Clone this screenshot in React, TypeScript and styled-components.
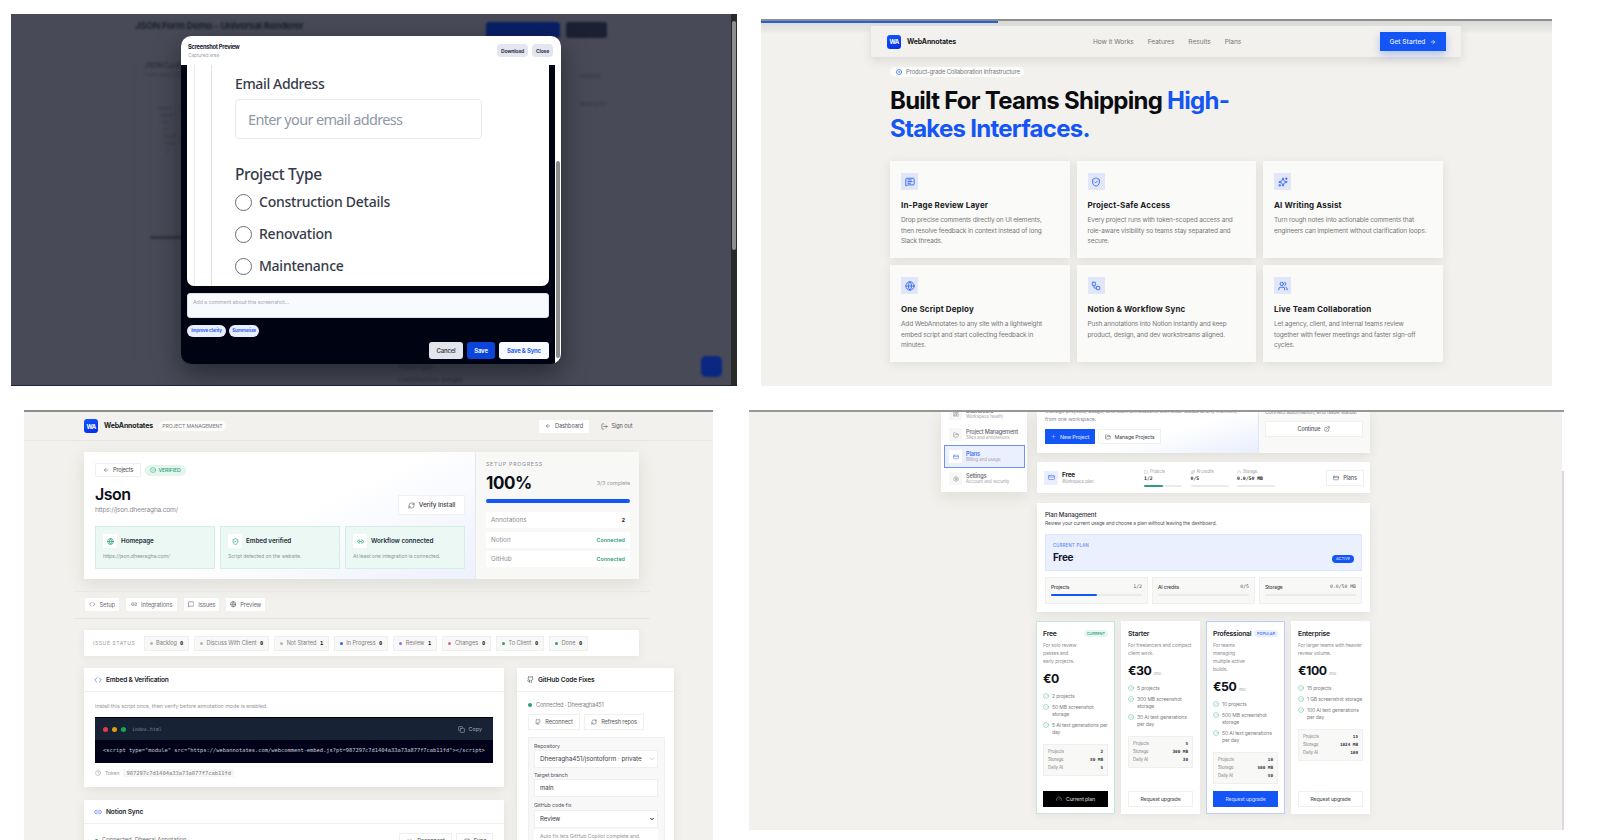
import React from "react";
import styled, { createGlobalStyle, css } from "styled-components";
import {
  ArrowLeft,
  ArrowRight,
  ChevronDown,
  CircleCheck,
  CircleDot,
  Clock,
  Code,
  Copy,
  CreditCard,
  ExternalLink,
  Folder,
  FolderOpen,
  Gauge,
  Github,
  Globe,
  LayoutDashboard,
  Link2,
  LogOut,
  MessageSquare,
  MessageSquareText,
  Plus,
  RefreshCw,
  Settings,
  ShieldCheck,
  Sparkles,
  Users,
  Workflow,
} from "lucide-react";

const BLUE = "#1455f5";
const GREEN = "#2f9e7c";

const GlobalStyle = createGlobalStyle`
  * { box-sizing: border-box; }
  body {
    margin: 0;
    background: #fff;
    font-family: Inter, "Liberation Sans", sans-serif;
  }
  svg { flex: none; display: block; }
`;

interface TextProps {
  $size?: number;
  $weight?: number;
  $color?: string;
  $spacing?: number;
  $line?: number;
  $mono?: boolean;
}

const Text = styled.span<TextProps>`
  display: block;
  flex: none;
  white-space: pre;
  font-size: ${(p) => p.$size ?? 5.6}px;
  font-weight: ${(p) => p.$weight ?? 400};
  color: ${(p) => p.$color ?? "#77787b"};
  letter-spacing: ${(p) => p.$spacing ?? -0.2}px;
  line-height: ${(p) => p.$line ?? 8}px;
  ${(p) => p.$mono && css`font-family: "DejaVu Sans Mono", monospace;`}
`;

/* ---------- page ---------- */

const Page = styled.main`
  display: flex;
  width: 1600px;
  height: 840px;
  overflow: hidden;
`;

const LeftColumn = styled.div`
  width: 749px;
  flex: none;
`;

const RightColumn = styled.div`
  width: 851px;
  flex: none;
`;

/* ---------- screenshot preview ---------- */

const PreviewShot = styled.section`
  position: relative;
  display: flex;
  justify-content: space-between;
  width: 726px;
  height: 372px;
  margin: 14px 0 0 11px;
  background: #484b57;
  border-bottom: 1px solid #1c2438;
  overflow: hidden;
`;

const DimmedPage = styled.div`
  width: 596px;
  padding: 8px 0 0 124px;
  filter: blur(1px);
`;

const DimmedHeader = styled.div`
  display: flex;
  align-items: flex-start;
`;

const DimmedButton = styled.div<{ $color: string; $width: number; $left: number }>`
  width: ${(p) => p.$width}px;
  height: 16px;
  margin-left: ${(p) => p.$left}px;
  border-radius: 3px;
  background: ${(p) => p.$color};
`;

const DimmedBody = styled.div`
  display: flex;
  justify-content: space-between;
  margin: 20px 0 0 0;
  padding-left: 8px;
  height: 303px;
  border-left: 1px solid #454853;
`;

const DimmedColumn = styled.div<{ $top: number }>`
  padding-top: ${(p) => p.$top}px;
`;

const DimmedCode = styled.div`
  margin: 24px 0 0 12px;
`;

const DimmedRule = styled.div`
  width: 40px;
  height: 3px;
  margin: 82px 0 0 6px;
  background: #30333e;
`;

const DimmedFooter = styled.div`
  padding-left: 264px;
`;

const ChatBubble = styled.div`
  position: absolute;
  right: 15px;
  bottom: 8px;
  width: 21px;
  height: 21px;
  border-radius: 5px;
  background: #0a2882;
  filter: blur(1px);
`;

const PageScrollbar = styled.div`
  width: 6px;
  padding: 7px 1px 0;
  background: #292929;
`;

const PageThumb = styled.div`
  height: 229px;
  border-radius: 2px;
  background: #8f8f8f;
`;

const Modal = styled.div`
  position: absolute;
  left: 170px;
  top: 22px;
  width: 380px;
  height: 328px;
  border-radius: 10px;
  overflow: hidden;
  background: #000412;
`;

const ModalShadow = styled.div`
  position: absolute;
  left: 170px;
  top: 22px;
  width: 380px;
  height: 328px;
  border-radius: 10px;
  box-shadow: 0 10px 26px rgba(15, 15, 25, 0.55);
`;

const ModalHeader = styled.header`
  display: flex;
  align-items: center;
  height: 29px;
  padding: 0 8px 0 7px;
  background: #fff;
`;

const ModalTitle = styled.div`
  flex: 1;
`;

const SmallButton = styled.div<{ $width: number }>`
  display: flex;
  align-items: center;
  justify-content: center;
  width: ${(p) => p.$width}px;
  height: 13px;
  margin-left: 4px;
  border-radius: 4px;
  background: #e4e6ef;
`;

const ModalBody = styled.div`
  display: flex;
  justify-content: space-between;
  height: 299px;
  padding-left: 6px;
`;

const ModalContent = styled.div`
  width: 362px;
`;

const Capture = styled.div`
  display: flex;
  height: 221px;
  padding-left: 7px;
  border-radius: 0 0 7px 7px;
  background: #fff;
`;

const CaptureGutter = styled.div`
  width: 18px;
  border-left: 1px solid #e8eaf2;
  border-right: 1px solid #dfe1e6;
`;

const CaptureForm = styled.div`
  padding: 9px 0 0 23px;
  font-family: "Noto Sans", sans-serif;
`;

const EmailField = styled.div`
  display: flex;
  align-items: center;
  width: 247px;
  height: 40px;
  margin: 6px 0 26px;
  padding-left: 12px;
  border: 1px solid #e9ebf4;
  border-radius: 4px;
`;

const Radio = styled.div`
  display: flex;
  align-items: center;
  gap: 7px;
  height: 32px;
  &::before {
    content: "";
    box-sizing: border-box;
    width: 17px;
    height: 17px;
    border: 1.6px solid #6d6f77;
    border-radius: 50%;
  }
`;

const RadioList = styled.div`
  margin-top: 3px;
`;

const CommentBox = styled.div`
  height: 25px;
  margin-top: 7px;
  padding: 4px 5px;
  border-radius: 3px;
  background: #f9fafd;
  border: 1px solid #dcdfe6;
`;

const PillRow = styled.div`
  display: flex;
  gap: 3px;
  margin-top: 7px;
`;

const ActionPill = styled.div<{ $width: number }>`
  display: flex;
  align-items: center;
  justify-content: center;
  width: ${(p) => p.$width}px;
  height: 12px;
  border-radius: 6px;
  background: #e9eefc;
`;

const ModalFooter = styled.div`
  display: flex;
  justify-content: flex-end;
  gap: 4px;
  margin-top: 5px;
`;

const ModalButton = styled.div<{ $bg: string; $width: number }>`
  display: flex;
  align-items: center;
  justify-content: center;
  width: ${(p) => p.$width}px;
  height: 17px;
  border-radius: 3px;
  background: ${(p) => p.$bg};
`;

const ModalScrollbar = styled.div`
  width: 6px;
  padding: 96px 0 0 1px;
  background: #fff;
`;

const ModalThumb = styled.div`
  width: 4px;
  height: 197px;
  border-radius: 2px;
  background: #8d8d8d;
`;

const codeLines = ["\"fields\": {", "  \"name\":", "    \"id\"", "      \"a\"", "      \"type\"", "      \"label\"", "        {}"];

const PreviewPanel: React.FC = () => (
  <PreviewShot>
    <DimmedPage>
      <DimmedHeader>
        <Text $size={9.5} $weight={700} $color="#1b1e2c" $spacing={-0.3}>
          JSON Form Demo - Universal Renderer
        </Text>
        <DimmedButton $color="#091f66" $width={74} $left={182} />
        <DimmedButton $color="#1b2133" $width={41} $left={6} />
      </DimmedHeader>
      <DimmedBody>
        <DimmedColumn $top={4}>
          <Text $size={7} $weight={700} $color="#30333e">JSON Configuration</Text>
          <Text $size={5.5} $line={11} $color="#3a3d48">Paste your JSON config</Text>
          <DimmedCode>
            {codeLines.map((line) => (
              <Text key={line} $size={5} $line={7} $color="#383b46">{line}</Text>
            ))}
          </DimmedCode>
          <DimmedRule />
        </DimmedColumn>
        <DimmedColumn $top={4}>
          <Text $size={5.5} $line={28} $color="#343742">required</Text>
          <Text $size={5.5} $line={28} $color="#343742">description</Text>
        </DimmedColumn>
      </DimmedBody>
      <DimmedFooter>
        <Text $size={6} $line={12} $color="#282b36">Project Type</Text>
        <Text $size={6.5} $line={14} $spacing={0.1} $color="#282b36">Construction Details</Text>
      </DimmedFooter>
    </DimmedPage>
    <PageScrollbar>
      <PageThumb />
    </PageScrollbar>
    <ChatBubble />
    <ModalShadow />
    <Modal>
      <ModalHeader>
        <ModalTitle>
          <Text $size={5.8} $weight={700} $color="#1d2230" $line={9} $spacing={-0.28}>Screenshot Preview</Text>
          <Text $size={5} $color="#a3a7b3">Captured area</Text>
        </ModalTitle>
        <SmallButton $width={31}>
          <Text $size={5} $weight={700} $color="#343a4c">Download</Text>
        </SmallButton>
        <SmallButton $width={21}>
          <Text $size={5} $weight={700} $color="#343a4c">Close</Text>
        </SmallButton>
      </ModalHeader>
      <ModalBody>
        <ModalContent>
          <Capture>
            <CaptureGutter />
            <CaptureForm>
              <Text $size={14} $weight={500} $color="#363b49" $line={19} $spacing={-0.36}>Email Address</Text>
              <EmailField>
                <Text $size={14.5} $color="#9097a6" $line={20} $spacing={-0.65}>Enter your email address</Text>
              </EmailField>
              <Text $size={15.5} $weight={500} $color="#363b49" $line={18} $spacing={-0.35}>Project Type</Text>
              <RadioList>
                {["Construction Details", "Renovation", "Maintenance"].map((label) => (
                  <Radio key={label}>
                    <Text $size={14} $weight={500} $color="#363b49" $line={20} $spacing={-0.25}>{label}</Text>
                  </Radio>
                ))}
              </RadioList>
            </CaptureForm>
          </Capture>
          <CommentBox>
            <Text $size={5.3} $color="#a6abb6" $spacing={-0.1}>Add a comment about this screenshot...</Text>
          </CommentBox>
          <PillRow>
            <ActionPill $width={39}>
              <Text $size={4.6} $weight={700} $color="#3566f0">Improve clarity</Text>
            </ActionPill>
            <ActionPill $width={30}>
              <Text $size={4.6} $weight={700} $color="#3566f0">Summarize</Text>
            </ActionPill>
          </PillRow>
          <ModalFooter>
            <ModalButton $bg="#e2e5ec" $width={34}>
              <Text $size={6} $weight={600} $color="#3c4252">Cancel</Text>
            </ModalButton>
            <ModalButton $bg="#0c45da" $width={28}>
              <Text $size={6} $weight={700} $color="#e8eeff">Save</Text>
            </ModalButton>
            <ModalButton $bg="#f8faff" $width={50}>
              <Text $size={6} $weight={700} $color="#2c5ff0">Save &amp; Sync</Text>
            </ModalButton>
          </ModalFooter>
        </ModalContent>
        <ModalScrollbar>
          <ModalThumb />
        </ModalScrollbar>
      </ModalBody>
    </Modal>
  </PreviewShot>
);

/* ---------- shared brand ---------- */

const BrandRow = styled.div`
  display: flex;
  align-items: center;
  gap: 6px;
`;

const LogoTile = styled.div`
  display: flex;
  align-items: center;
  justify-content: center;
  width: 14px;
  height: 14px;
  border-radius: 3px;
  background: linear-gradient(160deg, #0f57ff, #0a2be0);
  color: #fff;
  font-size: 6px;
  font-weight: 700;
  letter-spacing: -0.6px;
`;

const Brand: React.FC = () => (
  <BrandRow>
    <LogoTile>WA</LogoTile>
    <Text $size={7} $weight={700} $color="#202124" $spacing={-0.15}>WebAnnotates</Text>
  </BrandRow>
);

/* ---------- landing page ---------- */

const Landing = styled.section`
  position: relative;
  width: 791px;
  height: 367px;
  margin: 19px 0 0 12px;
  background: linear-gradient(#d9dad8, #ecebe8 11px, #f2f1ed 12px);
  border-top: 2px solid #8d8e8c;
  overflow: hidden;
`;

const LoadingBar = styled.div`
  position: absolute;
  left: 0;
  top: -1px;
  width: 237px;
  height: 3px;
  background: #2560d8;
`;

const Nav = styled.nav`
  display: flex;
  align-items: center;
  width: 590px;
  height: 31px;
  margin: 5px 0 0 110px;
  padding: 0 15px 0 16px;
  background: #f2f1ee;
  box-shadow: 0 4px 9px rgba(60, 60, 50, 0.12);
`;

const NavLinks = styled.div`
  display: flex;
  gap: 14px;
  margin-left: 137px;
`;

const GetStarted = styled.div`
  display: flex;
  align-items: center;
  justify-content: center;
  gap: 5px;
  width: 66px;
  height: 19px;
  margin-left: auto;
  background: ${BLUE};
  color: #e4ebff;
  box-shadow: 0 4px 8px rgba(40, 90, 240, 0.3);
`;

const LandingBody = styled.div`
  width: 552.5px;
  margin: 10px 0 0 129px;
`;

const Eyebrow = styled.div`
  display: flex;
  align-items: center;
  gap: 4px;
  width: 134px;
  height: 10px;
  padding-left: 6px;
  border-radius: 5px;
  background: #fcfcfb;
  color: #4d7bf3;
`;

const Headline = styled.h1`
  margin: 10px 0 19px;
  font-size: 24px;
  font-weight: 700;
  line-height: 27.5px;
  letter-spacing: -0.74px;
  color: #0b0c10;
  white-space: nowrap;
  em {
    font-style: normal;
    color: ${BLUE};
  }
`;

const FeatureGrid = styled.div`
  display: grid;
  grid-template-columns: repeat(3, 1fr);
  grid-auto-rows: 97px;
  gap: 7px;
`;

const FeatureCard = styled.article`
  padding: 12px 11px 0;
  background: #fafaf8;
  box-shadow: 0 2px 9px rgba(80, 80, 65, 0.12);
`;

const FeatureIcon = styled.div`
  display: flex;
  align-items: center;
  justify-content: center;
  width: 17px;
  height: 17px;
  margin-bottom: 10px;
  background: #e1e7f9;
  color: #3e70f4;
`;

const FeatureTitle = styled.h3`
  margin: 0 0 5px;
  font-size: 8px;
  font-weight: 700;
  line-height: 10px;
  letter-spacing: 0.15px;
  color: #202124;
`;

const features = [
  {
    icon: MessageSquareText,
    title: "In-Page Review Layer",
    text: "Drop precise comments directly on UI elements,\nthen resolve feedback in context instead of long\nSlack threads.",
  },
  {
    icon: ShieldCheck,
    title: "Project-Safe Access",
    text: "Every project runs with token-scoped access and\nrole-aware visibility so teams stay separated and\nsecure.",
  },
  {
    icon: Sparkles,
    title: "AI Writing Assist",
    text: "Turn rough notes into actionable comments that\nengineers can implement without clarification loops.",
  },
  {
    icon: Globe,
    title: "One Script Deploy",
    text: "Add WebAnnotates to any site with a lightweight\nembed script and start collecting feedback in\nminutes.",
  },
  {
    icon: Workflow,
    title: "Notion & Workflow Sync",
    text: "Push annotations into Notion instantly and keep\nproduct, design, and dev workstreams aligned.",
  },
  {
    icon: Users,
    title: "Live Team Collaboration",
    text: "Let agency, client, and internal teams review\ntogether with fewer meetings and faster sign-off\ncycles.",
  },
];

const LandingPanel: React.FC = () => (
  <Landing>
    <LoadingBar />
    <Nav>
      <Brand />
      <NavLinks>
        {["How it Works", "Features", "Results", "Plans"].map((link) => (
          <Text key={link} $size={6.6} $spacing={-0.05}>{link}</Text>
        ))}
      </NavLinks>
      <GetStarted>
        <Text $size={6.6} $weight={500} $color="#e4ebff" $spacing={0}>Get Started</Text>
        <ArrowRight size={6} strokeWidth={3} />
      </GetStarted>
    </Nav>
    <LandingBody>
      <Eyebrow>
        <CircleDot size={6} strokeWidth={3.5} />
        <Text $size={6} $spacing={-0.17}>Product-grade Collaboration Infrastructure</Text>
      </Eyebrow>
      <Headline>
        Built For Teams Shipping <em>High-<br />Stakes Interfaces.</em>
      </Headline>
      <FeatureGrid>
        {features.map(({ icon: Icon, title, text }) => (
          <FeatureCard key={title}>
            <FeatureIcon>
              <Icon size={10} strokeWidth={2.4} />
            </FeatureIcon>
            <FeatureTitle>{title}</FeatureTitle>
            <Text $size={6.5} $line={10.6} $spacing={-0.15}>{text}</Text>
          </FeatureCard>
        ))}
      </FeatureGrid>
    </LandingBody>
  </Landing>
);

/* ---------- project page ---------- */

const Project = styled.section`
  width: 689px;
  height: 430px;
  margin: 24px 0 0 24px;
  border-top: 2px solid #8f8f8d;
  background: #f2f1ed;
  overflow: hidden;
`;

const ProjectHeader = styled.header`
  display: flex;
  align-items: center;
  height: 29px;
  padding: 0 70px 0 60px;
  border-bottom: 1px solid #e7e6e2;
`;

const PagePill = styled.div`
  display: flex;
  align-items: center;
  justify-content: center;
  width: 67px;
  height: 10px;
  margin: 0 auto 0 6px;
  border-radius: 5px;
  background: #fcfcfb;
`;

const BoxButton = styled.div<{ $width: number; $height?: number; $bg?: string; $color?: string; $plain?: boolean }>`
  display: flex;
  flex: none;
  align-items: center;
  justify-content: center;
  gap: 4px;
  width: ${(p) => p.$width}px;
  height: ${(p) => p.$height ?? 15}px;
  background: ${(p) => p.$bg ?? "#fff"};
  color: ${(p) => p.$color ?? "#55575e"};
  border: 1px solid ${(p) => p.$bg ?? "#f0f0ef"};
  ${(p) => p.$plain && css`background: none; border-color: transparent;`}
`;

const ProjectBody = styled.div`
  padding: 11px 0 0 60px;
`;

const Hero = styled.div`
  display: flex;
  width: 555px;
  height: 127px;
  background: #fff;
  box-shadow: 0 5px 16px rgba(80, 80, 60, 0.13);
`;

const HeroMain = styled.div`
  width: 392px;
  padding: 11px 10px 0 11px;
  border-right: 1px solid #e6e8ef;
  background: linear-gradient(155deg, #fff 52%, #edf1fe);
`;

const HeroTags = styled.div`
  display: flex;
  align-items: center;
  gap: 4px;
`;

const VerifiedPill = styled.div`
  display: flex;
  align-items: center;
  justify-content: center;
  gap: 2px;
  width: 41px;
  height: 11px;
  border-radius: 6px;
  background: #e2f6ee;
  color: ${GREEN};
`;

const HeroTitleRow = styled.div`
  display: flex;
  align-items: flex-end;
  justify-content: space-between;
  height: 38px;
`;

const HeroName = styled.div`
  padding-top: 7px;
  align-self: flex-start;
`;

const CheckGrid = styled.div`
  display: grid;
  grid-template-columns: repeat(3, 1fr);
  gap: 5px;
  margin-top: 11px;
`;

const CheckCard = styled.div`
  height: 43px;
  padding: 7px;
  background: #ecf8f4;
  border: 1px solid #d4eee4;
`;

const CheckHead = styled.div`
  display: flex;
  align-items: center;
  gap: 4px;
  margin-bottom: 4px;
`;

const CheckIcon = styled.div`
  display: flex;
  align-items: center;
  justify-content: center;
  width: 14px;
  height: 14px;
  background: #fff;
  color: ${GREEN};
`;

const HeroSide = styled.div`
  flex: 1;
  padding: 8px 9px 0 10px;
  background: #f8f8f6;
`;

const PercentRow = styled.div`
  display: flex;
  align-items: center;
  justify-content: space-between;
  height: 29px;
`;

const FullBar = styled.div`
  height: 4px;
  margin: 2px 0 9px;
  border-radius: 2px;
  background: ${BLUE};
`;

const SideRow = styled.div`
  display: flex;
  align-items: center;
  justify-content: space-between;
  height: 16px;
  margin-bottom: 3.7px;
  padding: 0 5px;
  background: #fff;
`;

const Tabs = styled.div`
  display: flex;
  gap: 5px;
  width: 576px;
  height: 28px;
  margin: 12px 0 0 -10px;
  padding: 5px 10px;
  border-top: 1px solid #e9e8e4;
  border-bottom: 1px solid #e6e5e1;
`;

const StatusBar = styled.div`
  display: flex;
  align-items: center;
  gap: 5px;
  width: 555px;
  height: 26px;
  margin: 11px 0 12px;
  padding-left: 9px;
  background: #fff;
  box-shadow: 0 2px 8px rgba(80, 80, 60, 0.08);
`;

const StatusLabel = styled.div`
  width: 46px;
`;

const StatusChip = styled.div<{ $width: number }>`
  display: flex;
  align-items: center;
  justify-content: space-between;
  width: ${(p) => p.$width}px;
  height: 15px;
  padding: 0 5px;
  background: #f8f8f7;
  border: 1px solid #efefed;
`;

const Dot = styled.i<{ $color: string; $size?: number }>`
  flex: none;
  width: ${(p) => p.$size ?? 3}px;
  height: ${(p) => p.$size ?? 3}px;
  border-radius: 50%;
  background: ${(p) => p.$color};
`;

const WorkColumns = styled.div`
  display: flex;
  gap: 13px;
`;

const WorkMain = styled.div`
  width: 420px;
`;

const Card = styled.div<{ $height: number }>`
  height: ${(p) => p.$height}px;
  margin-bottom: 13px;
  background: #fff;
  box-shadow: 0 3px 10px rgba(80, 80, 60, 0.1);
`;

const CardHead = styled.div`
  display: flex;
  align-items: center;
  gap: 4px;
  height: 24px;
  padding-left: 10px;
  border-bottom: 1px solid #f0f0f0;
  color: #3f71f5;
`;

const CardBody = styled.div<{ $top?: number }>`
  padding: ${(p) => p.$top ?? 10}px 11px 0;
`;

const CodeBlock = styled.div`
  height: 46px;
  margin: 7px 0 6px;
  background: #01021a;
  border-top: 1px solid #000;
`;

const CodeHead = styled.div`
  display: flex;
  align-items: center;
  gap: 4px;
  height: 22px;
  padding: 0 11px 0 8px;
  background: #172235;
  color: #a3acbb;
`;

const CodeFile = styled.div`
  flex: 1;
  margin-left: 2px;
`;

const CodeLine = styled.div`
  padding: 6px 0 0 8px;
`;

const TokenRow = styled.div`
  display: flex;
  align-items: center;
  gap: 4px;
  color: #9b9b9b;
`;

const TokenCode = styled.code`
  padding: 0 3px;
  background: #f6f6f5;
`;

const NotionRow = styled.div`
  display: flex;
  align-items: flex-start;
  gap: 4px;
  padding: 9px 11px 0 11px;
`;

const NotionState = styled.div`
  display: flex;
  align-items: center;
  gap: 4px;
  flex: 1;
  padding-top: 3px;
`;

const GithubCard = styled.aside`
  width: 157px;
  height: 190px;
  background: #fff;
  box-shadow: 0 3px 10px rgba(80, 80, 60, 0.1);
`;

const GithubState = styled.div`
  display: flex;
  align-items: center;
  gap: 4px;
  height: 8px;
  margin-bottom: 5px;
`;

const ButtonRow = styled.div<{ $gap: number }>`
  display: flex;
  gap: ${(p) => p.$gap}px;
`;

const RepoForm = styled.div`
  width: 137px;
  height: 130px;
  margin-top: 7px;
  padding: 4px 6px 0 5px;
  background: #f8f8f8;
  border: 1px solid #f0f0f0;
`;

const Field = styled.div`
  display: flex;
  align-items: center;
  justify-content: space-between;
  height: 18px;
  margin: 0 0 3px;
  padding: 0 2px 0 5px;
  background: #fff;
  border: 1px solid #efefef;
`;

const FieldHint = styled.div`
  margin-top: -2px;
  padding: 3px 6px;
  background: #fff;
`;

const checks = [
  { icon: Globe, title: "Homepage", text: "https://json.dheeragha.com/", fit: -0.1 },
  { icon: ShieldCheck, title: "Embed verified", text: "Script detected on the website.", fit: -0.1 },
  { icon: Link2, title: "Workflow connected", text: "At least one integration is connected.", fit: -0.1 },
];

const statuses = [
  { label: "Backlog", count: 0, color: "#b5b5b5", width: 45 },
  { label: "Discuss With Client", count: 0, color: "#b5b5b5", width: 75 },
  { label: "Not Started", count: 1, color: "#b5b5b5", width: 55 },
  { label: "In Progress", count: 0, color: "#2f62f5", width: 54 },
  { label: "Review", count: 1, color: "#a063f5", width: 44 },
  { label: "Changes", count: 0, color: "#f0569a", width: 49 },
  { label: "To Client", count: 0, color: GREEN, width: 48 },
  { label: "Done", count: 0, color: GREEN, width: 39 },
];

const tabs = [
  { icon: Code, label: "Setup", width: 36 },
  { icon: Link2, label: "Integrations", width: 53 },
  { icon: MessageSquare, label: "Issues", width: 37 },
  { icon: Globe, label: "Preview", width: 41 },
];

const script =
  '<script type="module" src="https://webannotates.com/webcomment-embed.js?pt=987297c7d1404a33a73a877f7cab11fd"></script>';

const ProjectPanel: React.FC = () => (
  <Project>
    <ProjectHeader>
      <Brand />
      <PagePill>
        <Text $size={5.2} $spacing={-0.15}>PROJECT MANAGEMENT</Text>
      </PagePill>
      <BoxButton $width={52}>
        <ArrowLeft size={6} />
        <Text $size={5.6} $color="#55575e" $spacing={-0.1}>Dashboard</Text>
      </BoxButton>
      <BoxButton $width={53} $plain>
        <LogOut size={7} />
        <Text $size={5.6} $color="#55575e" $spacing={-0.1}>Sign out</Text>
      </BoxButton>
    </ProjectHeader>
    <ProjectBody>
      <Hero>
        <HeroMain>
          <HeroTags>
            <BoxButton $width={46} $height={14}>
              <ArrowLeft size={6} />
              <Text $size={5.6} $color="#45474e">Projects</Text>
            </BoxButton>
            <VerifiedPill>
              <CircleCheck size={6} />
              <Text $size={5.2} $weight={500} $color={GREEN} $spacing={-0.1}>VERIFIED</Text>
            </VerifiedPill>
          </HeroTags>
          <HeroTitleRow>
            <HeroName>
              <Text $size={16} $weight={600} $color="#0c0e18" $line={20} $spacing={-0.5}>Json</Text>
              <Text $size={6.6} $color="#8c8e93" $line={13} $spacing={-0.2}>https://json.dheeragha.com/</Text>
            </HeroName>
            <BoxButton $width={67} $height={20}>
              <RefreshCw size={7} />
              <Text $size={6.4} $weight={500} $color="#404248" $spacing={-0.12}>Verify Install</Text>
            </BoxButton>
          </HeroTitleRow>
          <CheckGrid>
            {checks.map(({ icon: Icon, title, text, fit }) => (
              <CheckCard key={title}>
                <CheckHead>
                  <CheckIcon>
                    <Icon size={7} strokeWidth={2.5} />
                  </CheckIcon>
                  <Text $size={6.3} $weight={600} $color="#24303a" $spacing={-0.05}>{title}</Text>
                </CheckHead>
                <Text $size={5.2} $color="#8d9a97" $spacing={fit}>{text}</Text>
              </CheckCard>
            ))}
          </CheckGrid>
        </HeroMain>
        <HeroSide>
          <Text $size={5.2} $color="#8b8c90" $spacing={0.78}>SETUP PROGRESS</Text>
          <PercentRow>
            <Text $size={17} $weight={700} $color="#0c0e18" $line={22} $spacing={-0.4}>100%</Text>
            <Text $size={5.4} $color="#9a9a9c" $line={14} $spacing={-0.05}>3/3 complete</Text>
          </PercentRow>
          <FullBar />
          <SideRow>
            <Text $size={6.3} $color="#8b8c90" $spacing={0}>Annotations</Text>
            <Text $size={5.6} $weight={700} $color="#14161c" $mono>2</Text>
          </SideRow>
          <SideRow>
            <Text $size={6.3} $color="#8b8c90" $spacing={0}>Notion</Text>
            <Text $size={5.4} $weight={600} $color={GREEN} $spacing={0}>Connected</Text>
          </SideRow>
          <SideRow>
            <Text $size={6.3} $color="#8b8c90" $spacing={0}>GitHub</Text>
            <Text $size={5.4} $weight={600} $color={GREEN} $spacing={0}>Connected</Text>
          </SideRow>
        </HeroSide>
      </Hero>
      <Tabs>
        {tabs.map(({ icon: Icon, label, width }) => (
          <BoxButton key={label} $width={width}>
            <Icon size={6.5} />
            <Text $size={5.8} $color="#6b6c70" $spacing={-0.1}>{label}</Text>
          </BoxButton>
        ))}
      </Tabs>
      <StatusBar>
        <StatusLabel>
          <Text $size={5} $color="#9a9b9e" $spacing={0.6}>ISSUE STATUS</Text>
        </StatusLabel>
        {statuses.map(({ label, count, color, width }) => (
          <StatusChip key={label} $width={width}>
            <Dot $color={color} />
            <Text $size={5.6} $color="#808184" $spacing={-0.05}>{label}</Text>
            <Text $size={5.4} $weight={700} $color="#1b1d22" $mono>{count}</Text>
          </StatusChip>
        ))}
      </StatusBar>
      <WorkColumns>
        <WorkMain>
          <Card $height={119}>
            <CardHead>
              <Code size={8} />
              <Text $size={6.6} $weight={600} $color="#22242c" $spacing={-0.2}>Embed &amp; Verification</Text>
            </CardHead>
            <CardBody>
              <Text $size={5.4} $color="#97989b" $spacing={-0.07}>
                Install this script once, then verify before annotation mode is enabled.
              </Text>
              <CodeBlock>
                <CodeHead>
                  <Dot $color="#e03b45" $size={5} />
                  <Dot $color="#dba011" $size={5} />
                  <Dot $color="#14a850" $size={5} />
                  <CodeFile>
                    <Text $size={5} $color="#7d8899" $spacing={-0.05} $mono>index.html</Text>
                  </CodeFile>
                  <Copy size={7} />
                  <Text $size={5.4} $color="#a3acbb" $spacing={0}>Copy</Text>
                </CodeHead>
                <CodeLine>
                  <Text $size={5.39} $color="#c9cddb" $spacing={0} $mono>{script}</Text>
                </CodeLine>
              </CodeBlock>
              <TokenRow>
                <Clock size={6} />
                <Text $size={5.2} $color="#9b9b9b" $spacing={-0.1}>Token</Text>
                <TokenCode>
                  <Text $size={5.45} $color="#7b7b7d" $spacing={0} $mono>987297c7d1404a33a73a877f7cab11fd</Text>
                </TokenCode>
              </TokenRow>
            </CardBody>
          </Card>
          <Card $height={80}>
            <CardHead>
              <Link2 size={8} />
              <Text $size={6.6} $weight={600} $color="#22242c" $spacing={-0.15}>Notion Sync</Text>
            </CardHead>
            <NotionRow>
              <NotionState>
                <Dot $color={GREEN} />
                <Text $size={5.8} $color="#77787b" $spacing={-0.05}>Connected. Dheeraj Annotation</Text>
              </NotionState>
              <BoxButton $width={53} $height={16}>
                <Link2 size={7} />
                <Text $size={5.6} $color="#45474e" $spacing={-0.1}>Reconnect</Text>
              </BoxButton>
              <BoxButton $width={37} $height={16}>
                <RefreshCw size={7} />
                <Text $size={5.6} $color="#45474e" $spacing={-0.1}>Sync</Text>
              </BoxButton>
            </NotionRow>
          </Card>
        </WorkMain>
        <GithubCard>
          <CardHead>
            <Github size={7} color="#33353b" />
            <Text $size={6.6} $weight={600} $color="#22242c" $spacing={-0.15}>GitHub Code Fixes</Text>
          </CardHead>
          <CardBody $top={9}>
            <GithubState>
              <Dot $color={GREEN} $size={4} />
              <Text $size={5.6} $color="#85868a" $spacing={-0.18}>Connected · Dheeragha451</Text>
            </GithubState>
            <ButtonRow $gap={4}>
              <BoxButton $width={52} $height={16}>
                <Github size={6} />
                <Text $size={5.6} $color="#55575e" $spacing={-0.1}>Reconnect</Text>
              </BoxButton>
              <BoxButton $width={60} $height={16}>
                <RefreshCw size={6} />
                <Text $size={5.6} $color="#55575e" $spacing={-0.1}>Refresh repos</Text>
              </BoxButton>
            </ButtonRow>
            <RepoForm>
              <Text $size={5.3} $color="#55575e" $spacing={-0.1}>Repository</Text>
              <Field>
                <Text $size={6.4} $color="#45474e" $spacing={-0.1}>Dheeragha451/jsontoform · private</Text>
                <ChevronDown size={6} color="#9a9a9a" />
              </Field>
              <Text $size={5.3} $color="#55575e" $spacing={-0.1}>Target branch</Text>
              <Field>
                <Text $size={6} $color="#33353b" $spacing={0}>main</Text>
              </Field>
              <Text $size={5.3} $line={10} $color="#55575e" $spacing={-0.1}>GitHub code fix</Text>
              <Field>
                <Text $size={6} $color="#33353b" $spacing={0}>Review</Text>
                <ChevronDown size={6} strokeWidth={4} color="#1b1c22" />
              </Field>
              <FieldHint>
                <Text $size={5.2} $color="#97989b" $spacing={-0.05}>Auto fix lets GitHub Copilot complete and</Text>
              </FieldHint>
            </RepoForm>
          </CardBody>
        </GithubCard>
      </WorkColumns>
    </ProjectBody>
  </Project>
);

/* ---------- plans dashboard ---------- */

const Plans = styled.section`
  display: flex;
  width: 815px;
  height: 420px;
  margin-top: 24px;
  padding-left: 192px;
  border-top: 2px solid #979795;
  background: #f2f1ed;
  overflow: hidden;
`;

const PlansScrollbar = styled.div`
  width: 2px;
  margin-left: auto;
  padding-top: 59px;
  background: #fff;
  &::after {
    content: "";
    display: block;
    height: 362px;
    background: #dcdcdf;
  }
`;

const Sidebar = styled.aside`
  width: 86px;
  height: 80px;
  padding: 0 2px 0 3px;
  background: #fff;
  box-shadow: 0 5px 14px rgba(80, 80, 60, 0.12);
`;

const SideItem = styled.div<{ $active?: boolean; $first?: boolean }>`
  display: flex;
  align-items: center;
  gap: 4px;
  height: ${(p) => (p.$active ? 23 : 21)}px;
  padding-left: 4px;
  border: 1px solid ${(p) => (p.$active ? "#6f92f5" : "transparent")};
  background: ${(p) => (p.$active ? "#ebf0fe" : "none")};
  ${(p) => p.$first && css`margin-top: -9px;`}
`;

const SideIcon = styled.div<{ $active?: boolean }>`
  display: flex;
  align-items: center;
  justify-content: center;
  width: 13px;
  height: 13px;
  background: ${(p) => (p.$active ? "#fff" : "#f7f7f6")};
  color: ${(p) => (p.$active ? "#3f71f5" : "#85868a")};
`;

const PlansMain = styled.div`
  width: 333px;
  margin-left: 10px;
`;

const WelcomeCard = styled.div`
  display: flex;
  height: 41px;
  margin-bottom: 9px;
  background: #fff;
  box-shadow: 0 3px 10px rgba(80, 80, 60, 0.12);
`;

const WelcomeMain = styled.div`
  width: 222px;
  padding-left: 8px;
  border-right: 1px solid #e3e8f6;
  background: linear-gradient(165deg, #fff 55%, #e8eefe);
  > :first-child { margin-top: -5px; }
  > :last-child { margin-top: 6px; }
`;

const WelcomeSide = styled.div`
  flex: 1;
  padding-left: 6px;
  background: #f9f9f8;
  > :first-child { margin: -4px 0 5px; }
`;

const PlanSummary = styled.div`
  display: flex;
  align-items: center;
  height: 31px;
  margin-bottom: 10px;
  padding: 0 6px 0 7px;
  background: #fff;
  box-shadow: 0 3px 8px rgba(80, 80, 60, 0.08);
`;

const SummaryIcon = styled.div`
  display: flex;
  align-items: center;
  justify-content: center;
  width: 14px;
  height: 14px;
  background: #e9effe;
  color: #3f71f5;
`;

const SummaryName = styled.div`
  width: 82px;
  margin-left: 4px;
`;

const SummaryAction = styled.div`
  margin-left: auto;
`;

const Metric = styled.div`
  width: 38px;
  margin-right: 8.5px;
  color: #9b9b9e;
`;

const MetricLabel = styled.div`
  display: flex;
  align-items: center;
  gap: 2px;
`;

const Track = styled.div`
  height: 2px;
  margin-top: 3px;
  border-radius: 1px;
  background: #ebebea;
`;

const Fill = styled.div<{ $color: string; $share: number }>`
  width: ${(p) => p.$share}%;
  height: 100%;
  border-radius: 1px;
  background: ${(p) => p.$color};
`;

const Management = styled.div`
  height: 109px;
  margin-bottom: 9px;
  padding: 7px 8px 0;
  background: #fff;
  box-shadow: 0 3px 10px rgba(80, 80, 60, 0.1);
`;

const CurrentPlan = styled.div`
  display: flex;
  align-items: flex-end;
  justify-content: space-between;
  height: 37px;
  margin: 7px 0 6px;
  padding: 0 7px 5px;
  background: #ebf0fe;
  border: 1px solid #dbe5fc;
`;

const ActiveBadge = styled.div`
  display: flex;
  align-items: center;
  justify-content: center;
  width: 22px;
  height: 8px;
  margin-bottom: 2px;
  border-radius: 4px;
  background: ${BLUE};
`;

const UsageGrid = styled.div`
  display: grid;
  grid-template-columns: repeat(3, 1fr);
  gap: 4px;
`;

const UsageBox = styled.div`
  height: 27px;
  padding: 5px 5px 0;
  background: #f8f8f7;
  border: 1px solid #efefed;
`;

const SplitRow = styled.div`
  display: flex;
  align-items: center;
  justify-content: space-between;
`;

const PlanGrid = styled.div`
  display: grid;
  grid-template-columns: repeat(4, 79px);
  gap: 6px;
  width: 334px;
  margin-left: -1px;
`;

const PlanCard = styled.article<{ $border: string }>`
  display: flex;
  flex-direction: column;
  height: 193px;
  padding: 8px 6px 6px;
  background: #fff;
  border: 1px solid ${(p) => p.$border};
  box-shadow: 0 2px 8px rgba(80, 80, 60, 0.08);
`;

const PlanBadge = styled.div<{ $bg: string }>`
  height: 7px;
  margin-top: -2px;
  padding: 0 3px;
  border-radius: 4px;
  background: ${(p) => p.$bg};
`;

const PlanBlurb = styled.div`
  margin-top: 3px;
`;

const PriceRow = styled.div`
  display: flex;
  align-items: flex-end;
  gap: 2px;
  margin: 7px 0;
`;

const Perk = styled.div`
  display: flex;
  gap: 3px;
  margin-bottom: 4px;
  color: #63bd9e;
`;

const LimitBox = styled.div`
  margin-top: 4px;
  padding: 3px 4px;
  background: #f8f8f7;
  border: 1px solid #efefed;
`;

const PlanAction = styled.div`
  margin-top: auto;
`;

const sideItems = [
  { icon: LayoutDashboard, title: "Dashboard", text: "Workspace health" },
  { icon: FolderOpen, title: "Project Management", text: "Sites and annotations" },
  { icon: CreditCard, title: "Plans", text: "Billing and usage" },
  { icon: Settings, title: "Settings", text: "Account and security" },
];

const metrics = [
  { icon: Folder, label: "Projects", value: "1/2", share: 50 },
  { icon: Sparkles, label: "AI credits", value: "0/5", share: 0 },
  { icon: Gauge, label: "Storage", value: "0.0/50 MB", share: 0 },
];

const plans = [
  {
    name: "Free",
    badge: "CURRENT",
    text: "For solo review\npasses and\nearly projects.",
    price: "€0",
    perks: ["2 projects", "50 MB screenshot\nstorage", "5 AI text generations per\nday"],
    limits: ["2", "50 MB", "5"],
    border: "#c3e8da",
  },
  {
    name: "Starter",
    text: "For freelancers and compact\nclient work.",
    price: "€30",
    perks: ["5 projects", "300 MB screenshot\nstorage", "30 AI text generations\nper day"],
    limits: ["5", "300 MB", "30"],
    border: "#fff",
  },
  {
    name: "Professional",
    badge: "POPULAR",
    text: "For teams\nmanaging\nmultiple active\nbuilds.",
    price: "€50",
    perks: ["10 projects", "500 MB screenshot\nstorage", "50 AI text generations\nper day"],
    limits: ["10", "500 MB", "50"],
    border: "#bccdfb",
  },
  {
    name: "Enterprise",
    text: "For larger teams with heavier\nreview volume.",
    price: "€100",
    perks: ["15 projects", "1 GB screenshot storage", "100 AI text generations\nper day"],
    limits: ["15", "1024 MB", "100"],
    border: "#fff",
  },
];

const PlansPanel: React.FC = () => (
  <Plans>
    <Sidebar>
      {sideItems.map(({ icon: Icon, title, text }, index) => {
        const active = title === "Plans";
        return (
          <SideItem key={title} $active={active} $first={index === 0}>
            <SideIcon $active={active}>
              <Icon size={6} />
            </SideIcon>
            <div>
              <Text $size={5.6} $weight={active ? 600 : 500} $line={6.5} $color={active ? "#3f71f5" : "#66686e"} $spacing={-0.2}>{title}</Text>
              <Text $size={4.4} $line={5.5} $color="#a0a1a5" $spacing={-0.05}>{text}</Text>
            </div>
          </SideItem>
        );
      })}
    </Sidebar>
    <PlansMain>
      <WelcomeCard>
        <WelcomeMain>
          <Text $size={5.3} $color="#8c8d91" $spacing={-0.1}>
            {"Manage projects, usage, and team annotations with clear status at any moment,\nfrom one workspace."}
          </Text>
          <ButtonRow $gap={3}>
            <BoxButton $width={50} $bg={BLUE} $color="#d5e0ff">
              <Plus size={5} />
              <Text $size={5.4} $weight={500} $color="#d5e0ff" $spacing={-0.2}>New Project</Text>
            </BoxButton>
            <BoxButton $width={63}>
              <FolderOpen size={6} />
              <Text $size={5.4} $color="#45474e" $spacing={-0.2}>Manage Projects</Text>
            </BoxButton>
          </ButtonRow>
        </WelcomeMain>
        <WelcomeSide>
          <Text $size={5.3} $color="#8c8d91" $spacing={-0.1}>Connect automation, and issue status.</Text>
          <BoxButton $width={98} $height={16}>
            <Text $size={5.5} $weight={500} $color="#55575e" $spacing={-0.1}>Continue</Text>
            <ExternalLink size={6} />
          </BoxButton>
        </WelcomeSide>
      </WelcomeCard>
      <PlanSummary>
        <SummaryIcon>
          <CreditCard size={7} />
        </SummaryIcon>
        <SummaryName>
          <Text $size={6.4} $weight={700} $color="#22242c" $line={8} $spacing={-0.2}>Free</Text>
          <Text $size={4.4} $line={6} $color="#a0a1a5" $spacing={-0.15}>Workspace plan</Text>
        </SummaryName>
        {metrics.map(({ icon: Icon, label, value, share }) => (
          <Metric key={label}>
            <MetricLabel>
              <Icon size={4} />
              <Text $size={4.2} $color="#9b9b9e" $spacing={-0.15}>{label}</Text>
            </MetricLabel>
            <Text $size={4.8} $weight={700} $color="#22242c" $line={6} $spacing={0} $mono>{value}</Text>
            <Track>
              <Fill $color={GREEN} $share={share} />
            </Track>
          </Metric>
        ))}
        <SummaryAction>
          <BoxButton $width={38} $height={16}>
            <CreditCard size={6} />
            <Text $size={5.5} $color="#45474e" $spacing={-0.1}>Plans</Text>
          </BoxButton>
        </SummaryAction>
      </PlanSummary>
      <Management>
        <Text $size={6.2} $weight={500} $color="#303238" $line={9} $spacing={-0.12}>Plan Management</Text>
        <Text $size={5} $color="#55575e" $spacing={-0.14}>
          Review your current usage and choose a plan without leaving the dashboard.
        </Text>
        <CurrentPlan>
          <div>
            <Text $size={4.2} $weight={500} $color="#5b84f5" $spacing={0.3}>CURRENT PLAN</Text>
            <Text $size={10} $weight={700} $color="#14172a" $line={15} $spacing={-0.3}>Free</Text>
          </div>
          <ActiveBadge>
            <Text $size={4} $weight={500} $color="#c6d6ff" $spacing={-0.1}>ACTIVE</Text>
          </ActiveBadge>
        </CurrentPlan>
        <UsageGrid>
          {metrics.map(({ label, value, share }) => (
            <UsageBox key={label}>
              <SplitRow>
                <Text $size={4.9} $weight={500} $color="#404248" $spacing={-0.1}>{label}</Text>
                <Text $size={4.8} $color="#55575e" $spacing={0} $mono>{value}</Text>
              </SplitRow>
              <Track>
                <Fill $color={BLUE} $share={share} />
              </Track>
            </UsageBox>
          ))}
        </UsageGrid>
      </Management>
      <PlanGrid>
        {plans.map((plan) => (
          <PlanCard key={plan.name} $border={plan.border}>
            <SplitRow>
              <Text $size={6.8} $weight={600} $color="#22242c" $spacing={-0.2}>{plan.name}</Text>
              {plan.badge && (
                <PlanBadge $bg={plan.name === "Free" ? "#e6f6f0" : "#eaf0fe"}>
                  <Text $size={3.9} $weight={500} $line={7} $color={plan.name === "Free" ? GREEN : "#3f71f5"} $spacing={-0.05}>
                    {plan.badge}
                  </Text>
                </PlanBadge>
              )}
            </SplitRow>
            <PlanBlurb>
              <Text $size={4.9} $line={8.1} $color="#8c8d91" $spacing={-0.12}>{plan.text}</Text>
            </PlanBlurb>
            <PriceRow>
              <Text $size={12.3} $weight={700} $color="#0f1118" $line={14} $spacing={-0.4}>{plan.price}</Text>
              {plan.price !== "€0" && <Text $size={4} $color="#a0a1a5" $spacing={0}>/mo</Text>}
            </PriceRow>
            {plan.perks.map((perk) => (
              <Perk key={perk}>
                <CircleCheck size={6} />
                <Text $size={5.1} $line={7} $color="#808185" $spacing={-0.15}>{perk}</Text>
              </Perk>
            ))}
            <LimitBox>
              {["Projects", "Storage", "Daily AI"].map((label, index) => (
                <SplitRow key={label}>
                  <Text $size={4.4} $color="#85868a" $spacing={-0.1}>{label}</Text>
                  <Text $size={4.3} $weight={700} $color="#303238" $spacing={0} $mono>{plan.limits[index]}</Text>
                </SplitRow>
              ))}
            </LimitBox>
            <PlanAction>
              {plan.name === "Free" ? (
                <BoxButton $width={65} $height={16} $bg="#000" $color="#aaa">
                  <Gauge size={6} />
                  <Text $size={5.2} $weight={500} $color="#c4c4c4" $spacing={-0.15}>Current plan</Text>
                </BoxButton>
              ) : (
                <BoxButton $width={65} $height={16} $bg={plan.name === "Professional" ? BLUE : undefined}>
                  <Text $size={5.2} $weight={500} $color={plan.name === "Professional" ? "#c6d6ff" : "#55575e"} $spacing={-0.15}>
                    Request upgrade
                  </Text>
                </BoxButton>
              )}
            </PlanAction>
          </PlanCard>
        ))}
      </PlanGrid>
    </PlansMain>
    <PlansScrollbar />
  </Plans>
);

const App: React.FC = () => {
  return (
    <>
      <GlobalStyle />
      <Page>
        <LeftColumn>
          <PreviewPanel />
          <ProjectPanel />
        </LeftColumn>
        <RightColumn>
          <LandingPanel />
          <PlansPanel />
        </RightColumn>
      </Page>
    </>
  );
};

export default App;
